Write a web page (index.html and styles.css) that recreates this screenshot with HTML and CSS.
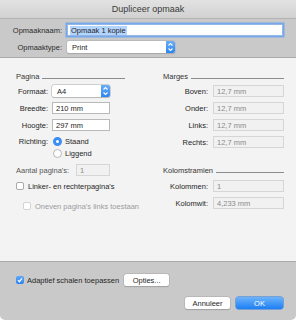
FILE: index.html
```html
<!DOCTYPE html>
<html lang="nl">
<head>
  <meta charset="UTF-8">
  <title>Dupliceer opmaak</title>
  <link rel="stylesheet" href="styles.css">
</head>
<body>
  <div class="window">
    <div class="titlebar">Dupliceer opmaak</div>

    <div class="head">
      <label class="hlabel">Opmaaknaam:</label>
      <div class="field focus"><span class="sel">Opmaak 1 kopie</span></div>
      <label class="hlabel">Opmaaktype:</label>
      <div class="popup wide">
        <span>Print</span>
        <span class="stepper"><svg width="9" height="12" viewBox="0 0 9 12"><path d="M2.5 4.5 L4.5 2.5 L6.5 4.5 M2.5 7.5 L4.5 9.5 L6.5 7.5" fill="none" stroke="#fff" stroke-width="1.1"/></svg></span>
      </div>
    </div>

    <div class="panel">
      <div class="col">
        <div class="group">Pagina<span class="rule"></span></div>
        <div class="row r-formaat">
          <span class="lbl">Formaat:</span>
          <div class="popup narrow">
            <span>A4</span>
            <span class="stepper"><svg width="9" height="12" viewBox="0 0 9 12"><path d="M2.5 4.5 L4.5 2.5 L6.5 4.5 M2.5 7.5 L4.5 9.5 L6.5 7.5" fill="none" stroke="#fff" stroke-width="1.1"/></svg></span>
          </div>
        </div>
        <div class="row"><span class="lbl">Breedte:</span><div class="field narrow">210 mm</div></div>
        <div class="row"><span class="lbl">Hoogte:</span><div class="field narrow">297 mm</div></div>
        <div class="row r-richting"><span class="lbl">Richting:</span><span class="radio on"></span><span>Staand</span></div>
        <div class="row r-liggend"><span class="lbl"></span><span class="radio"></span><span>Liggend</span></div>
        <div class="row r-aantal"><span class="muted">Aantal pagina's:</span><div class="field off small">1</div></div>
        <div class="row r-linker"><span class="check"></span><span>Linker- en rechterpagina's</span></div>
        <div class="row r-oneven"><span class="check off"></span><span class="dim">Oneven pagina's links toestaan</span></div>
      </div>

      <div class="col">
        <div class="group">Marges<span class="rule"></span></div>
        <div class="row r-formaat"><span class="lbl rl">Boven:</span><div class="field off">12,7 mm</div></div>
        <div class="row"><span class="lbl rl">Onder:</span><div class="field off">12,7 mm</div></div>
        <div class="row"><span class="lbl rl">Links:</span><div class="field off">12,7 mm</div></div>
        <div class="row"><span class="lbl rl">Rechts:</span><div class="field off">12,7 mm</div></div>
        <div class="group g-kolom">Kolomstramien<span class="rule"></span></div>
        <div class="row r-kolommen"><span class="lbl rl">Kolommen:</span><div class="field off">1</div></div>
        <div class="row"><span class="lbl rl">Kolomwit:</span><div class="field off">4,233 mm</div></div>
      </div>
    </div>

    <div class="foot">
      <div class="foot-row">
        <span class="check on"><svg width="8" height="8" viewBox="0 0 8 8"><path d="M2 4.2 L3.4 5.7 L6 2.3" fill="none" stroke="#fff" stroke-width="1.2"/></svg></span>
        <span>Adaptief schalen toepassen</span>
        <button class="btn opties">Opties...</button>
      </div>
      <div class="foot-buttons">
        <button class="btn">Annuleer</button>
        <button class="btn ok">OK</button>
      </div>
    </div>
  </div>
</body>
</html>
```

FILE: styles.css
```css
body {
  margin: 0;
  font-family: "Liberation Sans", Arial, sans-serif;
  font-size: 7.5px;
  color: #262626;
  background: #fff;
}
.window {
  width: 296px;
  height: 320px;
  background: #c9c9c9;
  border-radius: 0 0 5px 5px;
  display: flex;
  flex-direction: column;
  overflow: hidden;
}
.titlebar {
  height: 18px;
  flex: none;
  background: linear-gradient(#e2e2e2, #d1d1d1);
  border-bottom: 1px solid #b3b3b3;
  display: flex;
  align-items: center;
  justify-content: center;
  font-size: 9px;
  color: #3a3a3a;
}

/* bovenste velden */
.head {
  height: 38px;
  flex: none;
  display: grid;
  grid-template-columns: 62px 1fr;
  grid-template-rows: 12px 12px;
  column-gap: 5px;
  row-gap: 5px;
  padding: 5px 13px 0 0;
  box-sizing: border-box;
  align-items: center;
}
.hlabel {
  justify-self: end;
  color: #2b2b2b;
}
.field {
  height: 12px;
  box-sizing: border-box;
  background: #fff;
  border: 1px solid #b9b9b9;
  padding-left: 3px;
  display: flex;
  align-items: center;
  flex: 1;
}
.field.focus {
  border-color: #93b7e6;
  box-shadow: 0 0 0 1.5px #79a8ea;
  padding-left: 2px;
}
.sel {
  background: #b3d4fd;
  padding: 0 1px;
  line-height: 9px;
}
.field.off {
  background: #f1f1f1;
  border-color: #d6d6d6;
  color: #8a8a8a;
}
.popup {
  height: 12px;
  box-sizing: border-box;
  background: #fff;
  border-radius: 2px;
  box-shadow: 0 0 0 0.5px #b0b0b0, 0 0.5px 1px rgba(0,0,0,0.2);
  display: flex;
  align-items: center;
  justify-content: space-between;
  padding-left: 5px;
  flex: 1;
}
.popup.wide {
  width: 108px;
}
.narrow {
  flex: none;
  width: 58px;
}
.stepper {
  width: 9px;
  height: 12px;
  background: linear-gradient(#6aaef8, #2b85f2);
  border-radius: 0 2px 2px 0;
  display: flex;
}

/* middenpaneel */
.panel {
  height: 205px;
  flex: none;
  background: #f3f3f3;
  border-top: 1px solid #a9a9a9;
  border-bottom: 1px solid #a9a9a9;
  box-sizing: border-box;
  display: grid;
  grid-template-columns: 109px 1fr;
  column-gap: 38px;
  padding: 12px 12px 0 16px;
}
.col {
  display: flex;
  flex-direction: column;
  white-space: nowrap;
}
.group {
  height: 12px;
  display: flex;
  align-items: center;
  color: #333;
}
.rule {
  flex: 1;
  height: 0;
  border-bottom: 1px solid #8c8c8c;
  margin: 4px 0 0 3px;
}
.g-kolom {
  margin-top: 16px;
}
.row {
  height: 12px;
  display: flex;
  align-items: center;
  margin-top: 5px;
}
.r-formaat { margin-top: 3px; }
.r-richting { margin-top: 4px; }
.r-liggend { margin-top: 0; }
.r-aantal { margin-top: 5px; }
.r-linker { margin-top: 4px; }
.r-oneven { margin-top: 8px; padding-left: 7px; }
.r-kolommen { margin-top: 4px; }
.lbl {
  width: 32px;
  text-align: right;
  margin-right: 4px;
  flex: none;
}
.lbl.rl {
  width: 45px;
  margin-right: 5px;
}
.muted {
  color: #555;
  width: 60px;
}
.field.small {
  flex: none;
  width: 34px;
}
.dim {
  color: #9c9c9c;
}
.radio {
  width: 9px;
  height: 9px;
  box-sizing: border-box;
  border-radius: 50%;
  background: #fff;
  border: 1px solid #b5b5b5;
  margin: 0 3px 0 1px;
  flex: none;
}
.radio.on {
  border: 3px solid #3a8ef5;
  background: #fff;
}
.check {
  width: 8px;
  height: 8px;
  box-sizing: border-box;
  border: 1px solid #a9a9a9;
  border-radius: 2px;
  background: #fff;
  margin-right: 4px;
  flex: none;
  display: flex;
}
.check.off {
  border-color: #d3d3d3;
}
.check.on {
  border: none;
  background: linear-gradient(#62a8f7, #2a83f1);
}

/* onderbalk */
.foot {
  flex: 1;
  padding: 12px 13px 0 16px;
}
.foot-row {
  height: 12px;
  display: flex;
  align-items: center;
}
.foot-row .check {
  margin-right: 3px;
}
.btn {
  font-family: inherit;
  font-size: 7.5px;
  color: #262626;
  height: 12px;
  padding: 0;
  background: #fff;
  border: none;
  border-radius: 2.5px;
  box-shadow: 0 0 0 0.5px #ababab, 0 0.5px 1px rgba(0,0,0,0.25);
}
.opties {
  width: 45px;
  margin-left: 5px;
}
.foot-buttons {
  display: flex;
  justify-content: flex-end;
  gap: 6px;
  margin-top: 11px;
}
.foot-buttons .btn {
  width: 45px;
}
.foot-buttons .ok {
  width: 47px;
  color: #fff;
  background: linear-gradient(#6db3fa, #1c7ff4);
  box-shadow: 0 0 0 0.5px #2a78de;
}
```
